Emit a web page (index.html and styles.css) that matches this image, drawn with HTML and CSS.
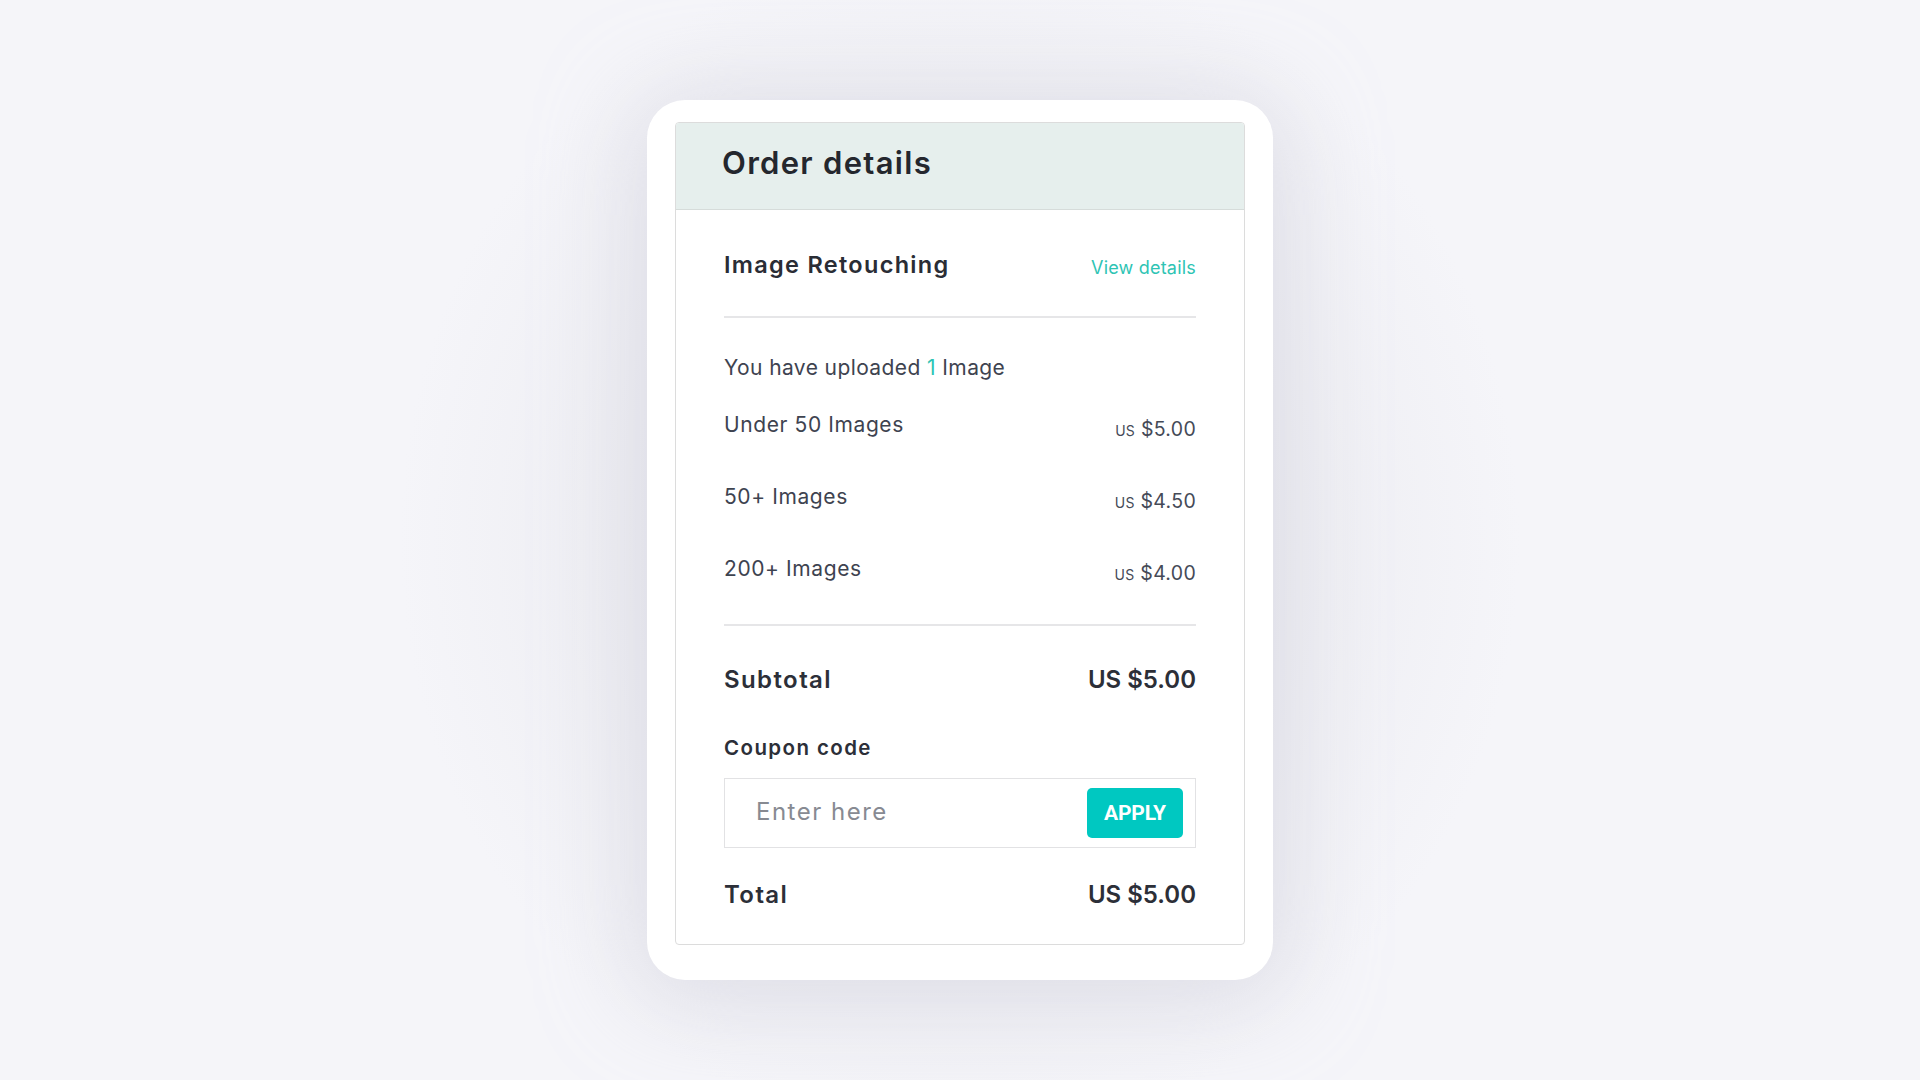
FILE: index.html
```html
<!DOCTYPE html>
<html lang="en">
<head>
<meta charset="utf-8">
<title>Order details</title>
<link rel="stylesheet" href="styles.css">
</head>
<body>
<main class="stage">
  <section class="card">
    <div class="panel">
      <header class="panel-head">
        <h1 class="title">Order details</h1>
      </header>
      <div class="panel-body">
        <div class="product">
          <span class="product-name">Image Retouching</span>
          <a class="link" href="#">View details</a>
        </div>
        <hr class="divider">
        <p class="uploaded">You have uploaded <span class="accent">1</span> Image</p>
        <ul class="tiers">
          <li class="tier"><span class="tier-label">Under 50 Images</span><span class="price"><span class="cur">US</span> $5.00</span></li>
          <li class="tier"><span class="tier-label">50+ Images</span><span class="price"><span class="cur">US</span> $4.50</span></li>
          <li class="tier"><span class="tier-label">200+ Images</span><span class="price"><span class="cur">US</span> $4.00</span></li>
        </ul>
        <hr class="divider divider-low">
        <div class="sum-row subtotal"><span class="sum-label">Subtotal</span><span>US $5.00</span></div>
        <label class="coupon-label" for="coupon">Coupon code</label>
        <div class="coupon">
          <input id="coupon" class="coupon-input" type="text" placeholder="Enter here">
          <button class="apply" type="button">APPLY</button>
        </div>
        <div class="sum-row total"><span class="sum-label">Total</span><span>US $5.00</span></div>
      </div>
    </div>
  </section>
</main>
</body>
</html>
```
FILE: styles.css
```css
* { box-sizing: border-box; }
html, body { margin: 0; padding: 0; }
body {
  width: 1920px;
  height: 1080px;
  background: #f5f5f9;
  font-family: "Inter", "Roboto", sans-serif;
  color: #3e4350;
  overflow: hidden;
}
.stage {
  height: 1080px;
  display: flex;
  align-items: center;
  justify-content: center;
  background: radial-gradient(ellipse 560px 600px at 50% 50%, #e9e9ee 0%, #ededf2 55%, #f5f5f9 100%);
}
.card {
  width: 626px;
  background: #ffffff;
  border-radius: 38px;
  padding: 22px 28px 35px 28px;
  box-shadow: 0 10px 90px 14px rgba(210, 210, 222, 0.6);
}
.panel {
  border: 1px solid #dcdcdc;
  border-radius: 4px;
  overflow: hidden;
  background: #fff;
}
.panel-head {
  background: #e6efed;
  border-bottom: 1px solid #d6dcda;
  padding: 20px 46px 26px;
}
.title {
  margin: 0;
  font-size: 31px;
  line-height: 40px;
  font-weight: 600;
  color: #24272e;
  letter-spacing: 1.3px;
}
.panel-body {
  padding: 35px 48px 29px;
}
.product {
  display: flex;
  justify-content: space-between;
  align-items: center;
  height: 40px;
}
.product-name {
  font-size: 23.5px;
  line-height: 40px;
  font-weight: 600;
  color: #2a2d35;
  letter-spacing: 1.3px;
}
.link {
  font-size: 18px;
  line-height: 40px;
  color: #2ec4b4;
  text-decoration: none;
  margin-top: 6px;
  letter-spacing: 0.2px;
}
.divider {
  margin: 31px 0 0;
  border: 0;
  height: 2px;
  background: #e6e6e8;
}
.uploaded {
  margin: 34px 0 0;
  font-size: 21px;
  line-height: 32px;
  color: #3e4350;
  letter-spacing: 0.4px;
}
.accent { color: #2ec4b4; }
.tiers {
  list-style: none;
  margin: 21px 0 0;
  padding: 0;
  display: flex;
  flex-direction: column;
  gap: 32px;
}
.tier {
  display: flex;
  justify-content: space-between;
  align-items: flex-start;
  height: 40px;
}
.tier-label {
  font-size: 21px;
  line-height: 40px;
  color: #3e4350;
  letter-spacing: 0.6px;
}
.price {
  font-size: 19.5px;
  line-height: 40px;
  margin-top: 4px;
  color: #454a57;
  letter-spacing: 0.3px;
}
.cur {
  font-size: 14px;
  letter-spacing: 0.3px;
}
.divider-low { margin-top: 35px; }
.sum-row {
  display: flex;
  justify-content: space-between;
  align-items: center;
  font-size: 24px;
  line-height: 40px;
  font-weight: 600;
  color: #2c2f38;
}
.sum-label { letter-spacing: 1.4px; }
.subtotal { margin-top: 34px; }
.coupon-label {
  display: block;
  margin-top: 33px;
  font-size: 20.5px;
  line-height: 30px;
  font-weight: 600;
  color: #2c2f38;
  letter-spacing: 1.4px;
}
.coupon {
  margin-top: 15px;
  height: 70px;
  border: 1px solid #e2e2e4;
  display: flex;
  align-items: center;
  padding: 0 12px 0 31px;
}
.coupon-input {
  flex: 1;
  min-width: 0;
  border: 0;
  outline: none;
  background: transparent;
  font-family: "Inter", "Roboto", sans-serif;
  font-size: 24px;
  letter-spacing: 1.5px;
  color: #2c2f38;
  padding: 0;
  margin-top: -4px;
}
.coupon-input::placeholder { color: #878a92; }
.apply {
  width: 96px;
  height: 50px;
  border: 0;
  border-radius: 5px;
  background: #00c8c1;
  color: #ffffff;
  font-family: "Roboto", "Inter", sans-serif;
  font-weight: 700;
  font-size: 21px;
  letter-spacing: -0.2px;
  padding: 0;
}
.total { margin-top: 27px; }
```
